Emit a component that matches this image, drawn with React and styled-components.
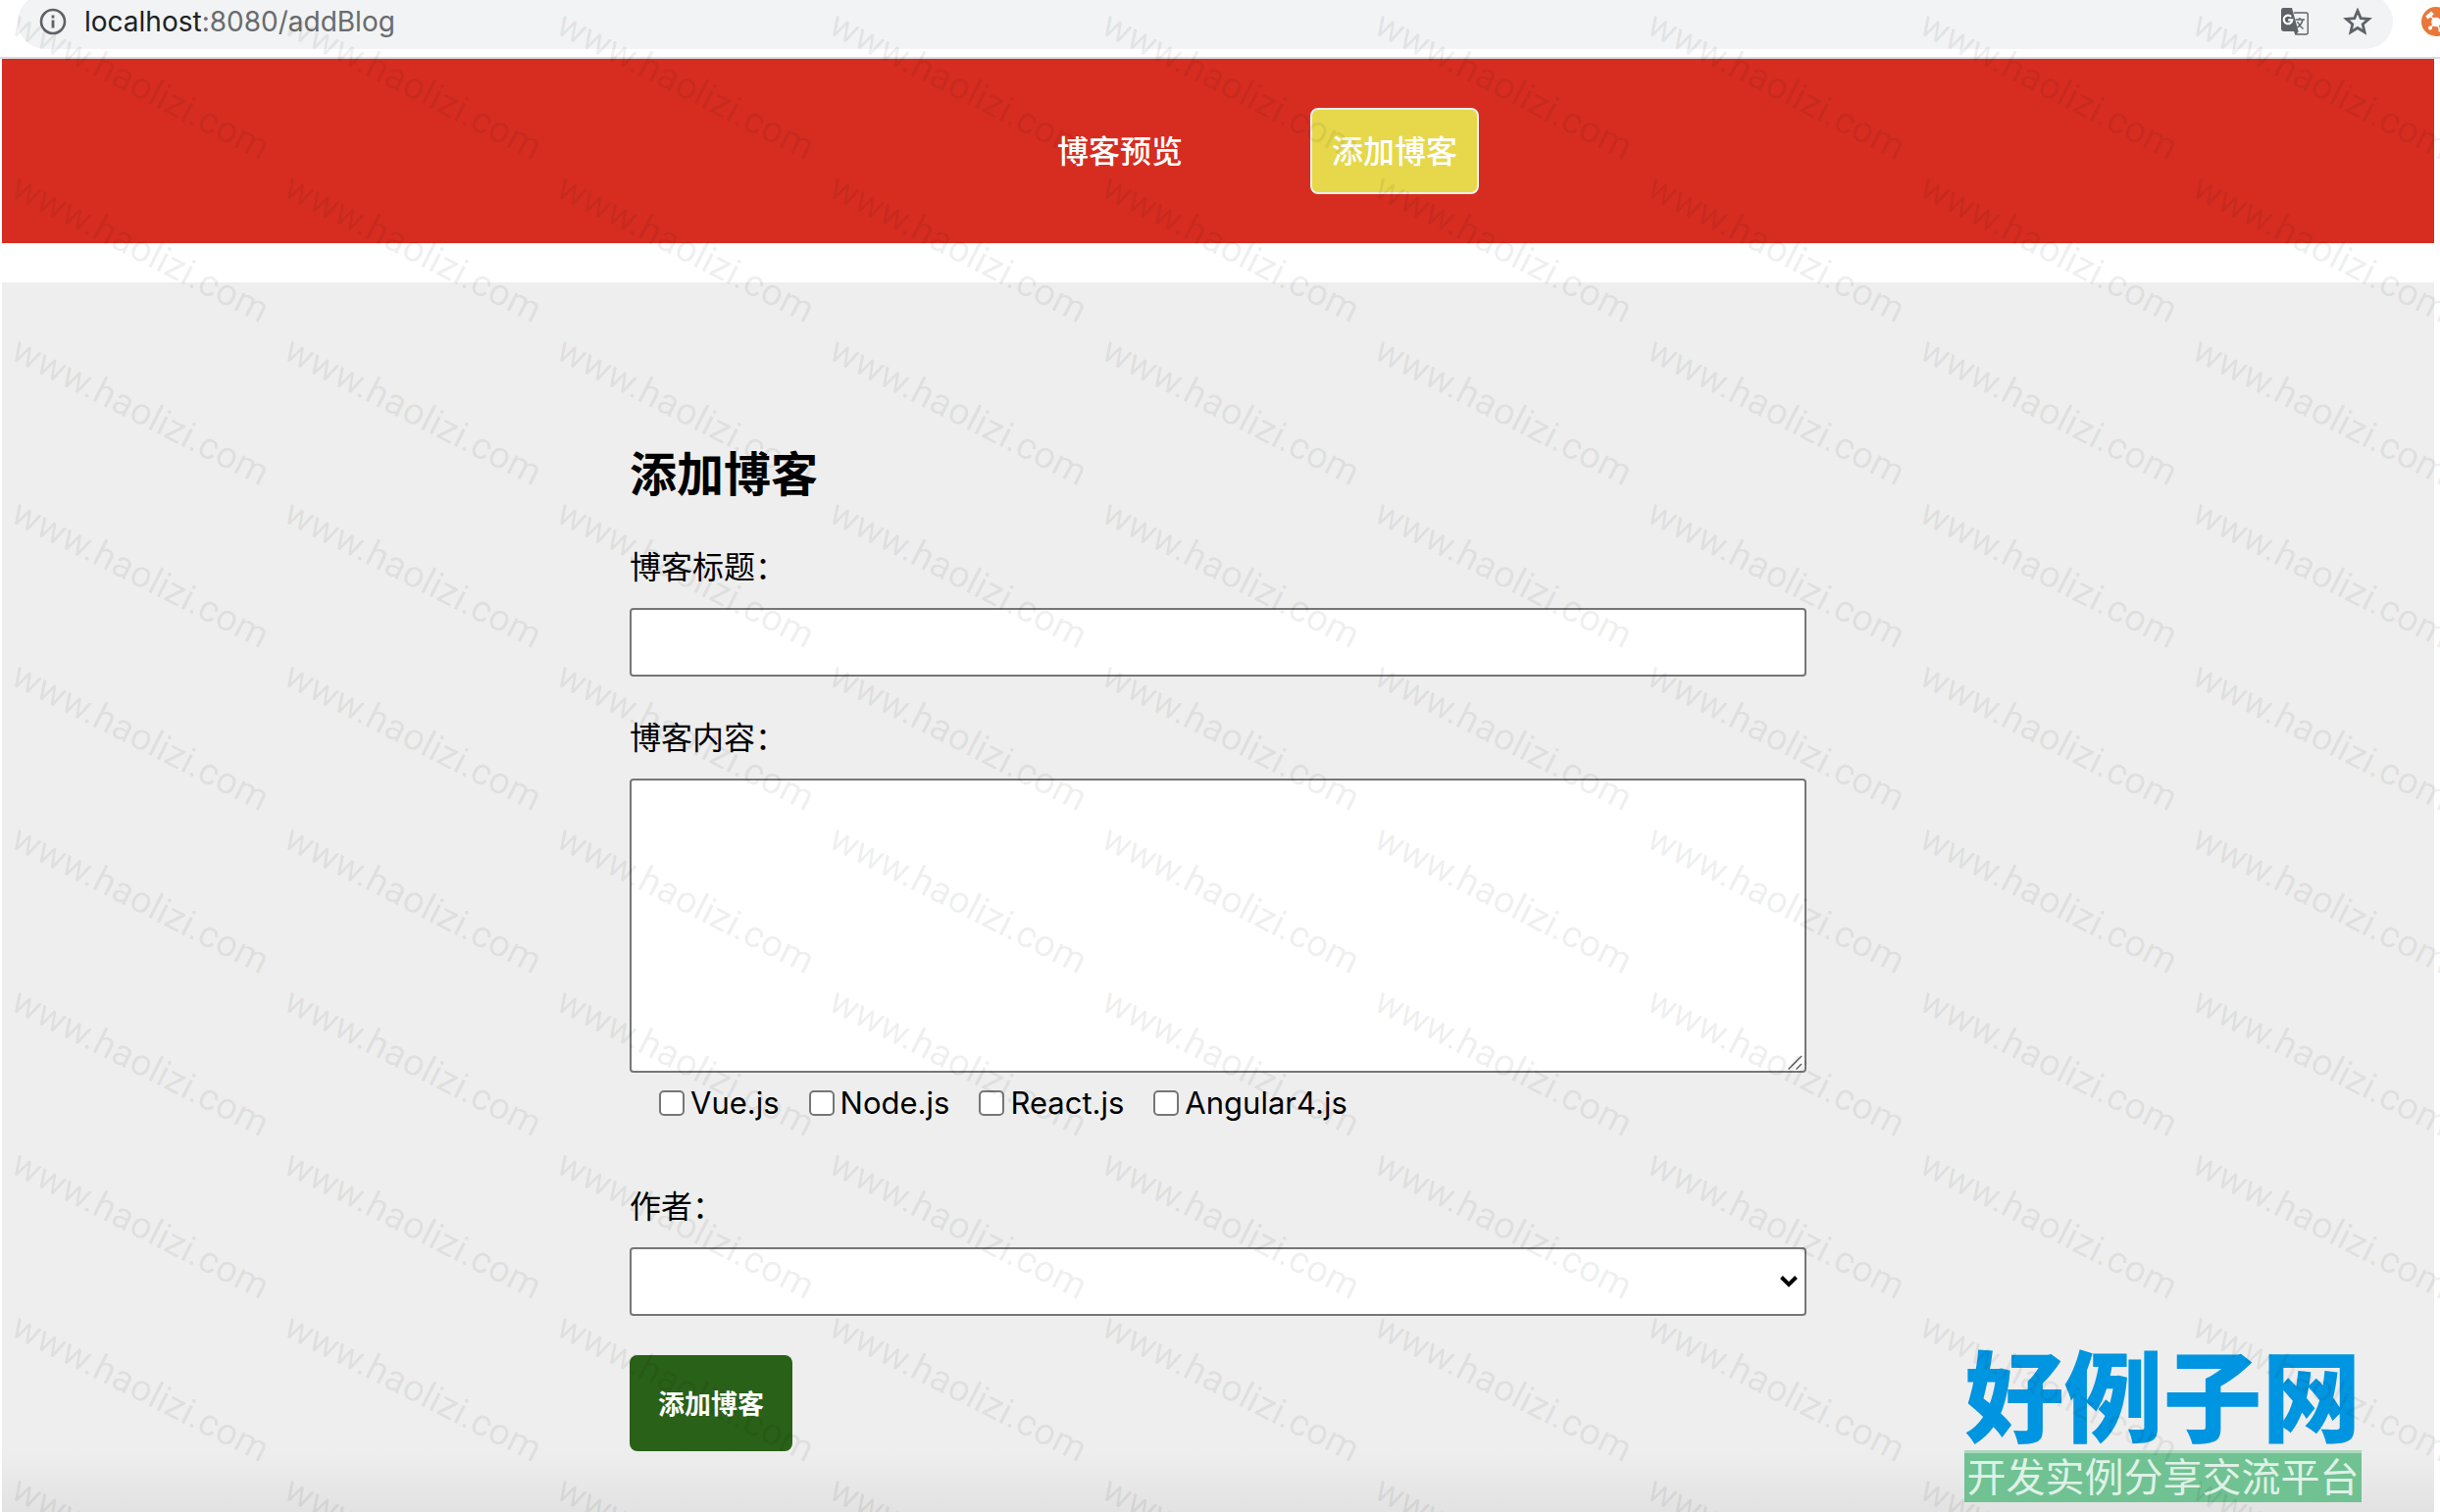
import React from "react";
import styled, { createGlobalStyle, css } from "styled-components";

const latin = `Inter, "Noto Sans CJK SC", sans-serif`;
const cjk = `"Noto Sans CJK SC", sans-serif`;

const GlobalStyle = createGlobalStyle`
  *, *::before, *::after { box-sizing: border-box; }
  body { margin: 0; background: #fff; color: #000; font-family: ${cjk}; }
`;

const Page = styled.div`
  position: relative;
  display: flex;
  flex-direction: column;
  min-height: 100vh;
  overflow: hidden;
`;

const BrowserBar = styled.div`
  display: flex;
  align-items: flex-end;
  gap: 29px;
  height: 60px;
  padding: 0 0 8px 18px;
  overflow: hidden;
  border-bottom: 2px solid #dadce0;
`;

const AddressPill = styled.div`
  flex: 1;
  display: flex;
  align-items: center;
  height: 56px;
  padding: 0 21px 0 22px;
  border-radius: 28px;
  background: #f1f3f4;
`;

const Address = styled.span`
  flex: 1;
  margin-left: 18px;
  font: 28px/36px ${latin};
  color: #696b6e;
`;

const Host = styled.span`
  color: #202124;
`;

const IconButton = styled.button`
  display: flex;
  padding: 0;
  margin-left: ${(p) => p.$gap || 0}px;
  border: 0;
  background: none;
`;

const ExtensionSlot = styled.div`
  display: flex;
  flex: none;
  width: 19px;
  height: 43px;
  overflow: hidden;

  svg { flex: none; }
`;

const Site = styled.div`
  flex: 1;
  display: flex;
  flex-direction: column;
  gap: 40px;
  padding: 0 6px 0 2px;
`;

const Nav = styled.nav`
  display: flex;
  justify-content: center;
  gap: 108px;
  padding: 50px 0 50px 80px;
  background: #d62d20;
`;

const NavLink = styled.a`
  padding: 18px 20px 22px;
  border: 2px solid transparent;
  border-radius: 8px;
  font-size: 32px;
  font-weight: 500;
  line-height: 44px;
  color: #fff;
  text-decoration: none;
  ${(p) =>
    p.$active &&
    css`
      background: #e6d84a;
      border-color: #eee;
    `}
`;

const Main = styled.main`
  flex: 1;
  padding: 158px 20px 62px;
  background: linear-gradient(to top, #e2e2e2, #eee 62px);
`;

const Form = styled.form`
  display: flex;
  flex-direction: column;
  max-width: 1200px;
  margin: 0 auto;
`;

const Title = styled.h2`
  margin: 0 0 2px;
  font-size: 48px;
  line-height: 68px;
  font-weight: 700;
`;

const Label = styled.label`
  margin: 38px 0 22px;
  font-size: 32px;
  line-height: 44px;
`;

const control = css`
  display: block;
  width: 100%;
  margin: 0;
  padding: 16px;
  border: 2px solid #767676;
  border-radius: 4px;
  background: #fff;
  font: 27px/34px ${latin};
  outline: 0;
`;

const TextInput = styled.input`
  ${control}
  height: 70px;
`;

const TextArea = styled.textarea`
  ${control}
  height: 300px;
  resize: none;
`;

const Select = styled.select`
  ${control}
  height: 70px;
  appearance: none;
`;

const Field = styled.div`
  position: relative;
`;

const Grip = styled.svg`
  position: absolute;
  right: 4px;
  bottom: 3px;
  pointer-events: none;
`;

const Chevron = styled.svg`
  position: absolute;
  right: 9px;
  top: 28px;
  pointer-events: none;
`;

const Checks = styled.div`
  display: flex;
  flex-wrap: wrap;
  gap: 30px;
  padding: 9px 30px 21px;
`;

const Check = styled.label`
  display: flex;
  align-items: center;
  gap: 6px;
  font: 31px/44px ${latin};
`;

const Box = styled.input`
  appearance: none;
  width: 26px;
  height: 26px;
  margin: 0;
  border: 2px solid #767676;
  border-radius: 5px;
  background: #fff;
  &:checked { background: #767676; }
`;

const Submit = styled.button`
  align-self: flex-start;
  margin-top: 40px;
  padding: 30px 29px;
  border: 0;
  border-radius: 8px;
  background: #2a6118;
  color: #fff;
  font: 700 27px/38px ${cjk};
`;

const Overlay = styled.div`
  position: absolute;
  inset: 0;
  overflow: hidden;
  pointer-events: none;
`;

const MarkGrid = styled.div`
  display: grid;
  grid-template-columns: repeat(9, 278px);
  grid-auto-rows: 166px;
  padding: 2px 0 0 25px;
`;

const Mark = styled.span`
  font: 38px/44px Roboto, sans-serif;
  color: rgba(0, 0, 0, 0.07);
  white-space: nowrap;
  transform: rotate(27deg);
  transform-origin: 0 0;
`;

const Badge = styled.div`
  position: absolute;
  right: 80px;
  bottom: 10px;
  width: 405px;
  text-align: center;
`;

const BadgeName = styled.div`
  padding-bottom: 14px;
  font: 900 101px/92px ${cjk};
  color: #0095e0;
  white-space: nowrap;
`;

const BadgeTag = styled.div`
  padding-bottom: 6px;
  border-top: 3px solid #a9dabe;
  background: #70c292;
  color: rgba(255, 255, 255, 0.8);
  font: 40px/44px ${cjk};
  white-space: nowrap;
`;

const frameworks = ["Vue.js", "Node.js", "React.js", "Angular4.js"];
const marks = Array.from({ length: 90 }, (_, i) => i);

function InfoIcon() {
  return (
    <svg width="28" height="28" viewBox="0 0 28 28" aria-hidden="true">
      <circle cx="14" cy="14" r="12" fill="none" stroke="#5f6368" strokeWidth="2.6" />
      <path d="M14 12.500v8M14 7.500v3" stroke="#5f6368" strokeWidth="2.800" />
    </svg>
  );
}

function TranslateIcon() {
  return (
    <svg width="28" height="28" viewBox="0 0 28 28" aria-hidden="true">
      <path d="M13 5h12.500a1.800 1.800 0 0 1 1.800 1.800v18.400a1.800 1.800 0 0 1-1.800 1.800H15" fill="none" stroke="#5f6368" strokeWidth="1.400" />
      <path d="M2.400 0H11l6.600 24H2.400A2.400 2.400 0 0 1 0 21.600V2.400A2.400 2.400 0 0 1 2.400 0z" fill="#5f6368" />
      <path d="M13 24h5l-3.500 4z" fill="#5f6368" />
      <path d="M10.200 9A4.300 4.300 0 1 0 11.300 12.300H7.200" fill="none" stroke="#fff" strokeWidth="2.200" />
      <path d="M14.500 12h9.500M19 10v2M22 12c-.8 4-3.200 6.500-5.500 8M16.500 14c1.500 3 3.500 5.500 6 7.500" fill="none" stroke="#5f6368" strokeWidth="1.500" />
    </svg>
  );
}

function StarIcon() {
  return (
    <svg width="30" height="28" viewBox="0 0 30 28" aria-hidden="true">
      <path d="M15 3l3.200 7.600 8.300.7-6.300 5.400 1.900 8.100L15 20.500l-7.100 4.300 1.900-8.100-6.300-5.400 8.300-.7z" fill="none" stroke="#5f6368" strokeWidth="2.800" />
    </svg>
  );
}

function ExtensionIcon() {
  return (
    <svg width="30" height="30" viewBox="0 0 30 30" aria-hidden="true">
      <circle cx="15" cy="15" r="15" fill="#e8783a" />
      <path d="M15 15L8 8M15 15l-5.500 6M15 15l4 9" stroke="#fff" strokeWidth="1.600" />
      <path d="M5.500 11l6-5" stroke="#fff" strokeWidth="4" />
      <circle cx="15" cy="15.500" r="4.800" fill="#fff" />
      <circle cx="9" cy="21.500" r="2" fill="#fff" />
      <circle cx="19" cy="24" r="1.600" fill="#fff" />
    </svg>
  );
}

export default function App() {
  return (
    <Page lang="zh-CN">
      <GlobalStyle />
      <BrowserBar>
        <AddressPill>
          <InfoIcon />
          <Address>
            <Host>localhost</Host>:8080/addBlog
          </Address>
          <IconButton type="button" aria-label="翻译">
            <TranslateIcon />
          </IconButton>
          <IconButton type="button" aria-label="收藏" $gap={35}>
            <StarIcon />
          </IconButton>
        </AddressPill>
        <ExtensionSlot>
          <ExtensionIcon />
        </ExtensionSlot>
      </BrowserBar>

      <Site>
        <Nav>
          <NavLink href="#/">博客预览</NavLink>
          <NavLink href="#/addBlog" $active>
            添加博客
          </NavLink>
        </Nav>
        <Main>
          <Form onSubmit={(e) => e.preventDefault()}>
            <Title>添加博客</Title>
            <Label htmlFor="title">博客标题：</Label>
            <TextInput id="title" type="text" />
            <Label htmlFor="content">博客内容：</Label>
            <Field>
              <TextArea id="content" />
              <Grip width="15" height="15" viewBox="0 0 15 15" aria-hidden="true">
                <path d="M0.500 14.500L14 1M8.500 14.500L14 9" stroke="#555" strokeWidth="1.400" />
              </Grip>
            </Field>
            <Checks>
              {frameworks.map((name) => (
                <Check key={name}>
                  <Box type="checkbox" value={name} />
                  {name}
                </Check>
              ))}
            </Checks>
            <Label htmlFor="author">作者：</Label>
            <Field>
              <Select id="author" defaultValue="">
                <option value=""></option>
              </Select>
              <Chevron width="18" height="14" viewBox="0 0 18 14" aria-hidden="true">
                <path d="M1.500 2.500L9 10l7.500-7.500" fill="none" stroke="#000" strokeWidth="4" />
              </Chevron>
            </Field>
            <Submit type="submit">添加博客</Submit>
          </Form>
        </Main>
      </Site>

      <Badge>
        <BadgeName>好例子网</BadgeName>
        <BadgeTag>开发实例分享交流平台</BadgeTag>
      </Badge>
      <Overlay aria-hidden="true">
        <MarkGrid>
          {marks.map((i) => (
            <Mark key={i}>www.haolizi.com</Mark>
          ))}
        </MarkGrid>
      </Overlay>
    </Page>
  );
}
